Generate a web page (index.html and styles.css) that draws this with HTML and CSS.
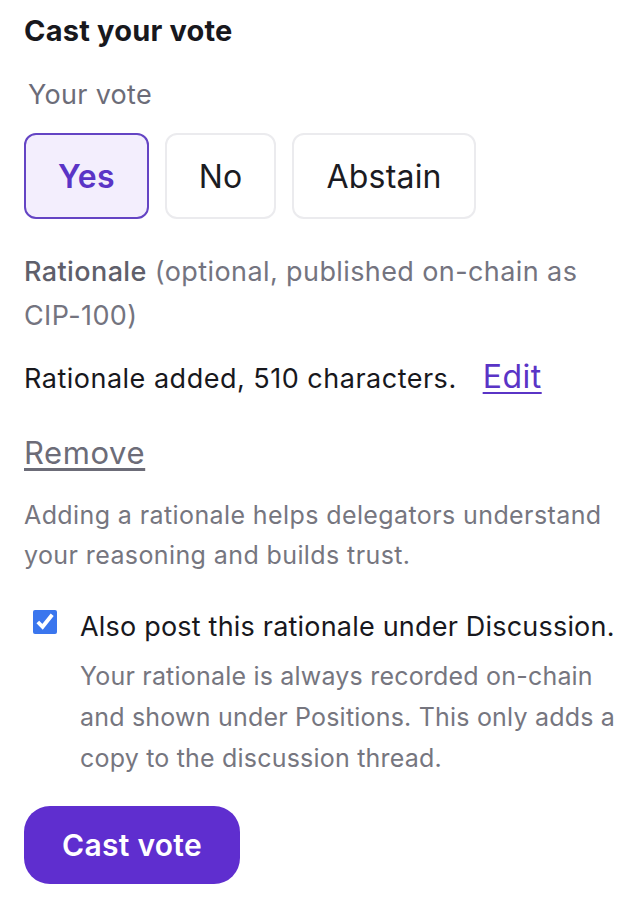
FILE: index.html
```
<!DOCTYPE html>
<html lang="en">
<head>
    <meta charset="UTF-8">
    <meta name="viewport" content="width=device-width, initial-scale=1.0">
    <title>Cast your vote</title>
    <link rel="stylesheet" href="styles.css">
</head>
<body>
    <section class="vote-panel">
        <h2 class="panel-title">Cast your vote</h2>

        <div class="field-label">Your vote</div>
        <div class="choice-group">
            <button class="choice choice-active">Yes</button>
            <button class="choice">No</button>
            <button class="choice">Abstain</button>
        </div>

        <p class="rationale-label"><strong>Rationale</strong> (optional, published on-chain as CIP-100)</p>

        <div class="rationale-status">
            <span>Rationale added, 510 characters.</span>
            <a href="#" class="link-edit">Edit</a>
        </div>
        <a href="#" class="link-remove">Remove</a>

        <p class="hint">Adding a rationale helps delegators understand your reasoning and builds trust.</p>

        <label class="check-row">
            <input type="checkbox" checked>
            <span class="check-text">
                <span class="check-title">Also post this rationale under Discussion.</span>
                <span class="check-note">Your rationale is always recorded on-chain and shown under Positions. This only adds a copy to the discussion thread.</span>
            </span>
        </label>

        <button class="submit-button">Cast vote</button>
    </section>
</body>
</html>
```

FILE: styles.css
```
* {
    margin: 0;
    padding: 0;
    box-sizing: border-box;
}

body {
    font-family: 'Inter', 'Noto Sans', sans-serif;
    background: #fff;
    color: #1b1b22;
}

.vote-panel {
    padding: 13px 24px 0;
    display: flex;
    flex-direction: column;
    align-items: flex-start;
}

.panel-title {
    font-size: 29px;
    font-weight: 700;
    line-height: 36px;
    letter-spacing: 0.2px;
    color: #18181d;
}

.field-label {
    margin-top: 29px;
    padding-left: 4px;
    font-size: 27px;
    line-height: 34px;
    letter-spacing: 0.3px;
    color: #6c6c78;
}

.choice-group {
    display: flex;
    gap: 16px;
    margin-top: 21px;
}

.choice {
    font-family: inherit;
    height: 86px;
    padding: 0 32px;
    font-size: 32px;
    letter-spacing: 0.2px;
    color: #1b1b22;
    background: #fff;
    border: 2px solid #ebebee;
    border-radius: 12px;
}

.choice-active {
    color: #5a34c6;
    font-weight: 600;
    background: #f3eefd;
    border-color: #6444c4;
}

.rationale-label {
    margin-top: 31px;
    font-size: 27px;
    line-height: 44px;
    letter-spacing: 0.4px;
    color: #74747f;
}

.rationale-label strong {
    font-weight: 500;
    color: #5f5f6b;
}

.rationale-status {
    margin-top: 19px;
    font-size: 27px;
    line-height: 40px;
    letter-spacing: 0.5px;
    color: #18181d;
    display: flex;
    align-items: baseline;
    gap: 26px;
}

.link-edit {
    font-size: 32px;
    color: #5a34c6;
    text-decoration-thickness: 2px;
    text-underline-offset: 4px;
}

.link-remove {
    margin-top: 34px;
    font-size: 31px;
    line-height: 40px;
    letter-spacing: 0.6px;
    color: #6c6c78;
    text-decoration-thickness: 3px;
    text-underline-offset: 4px;
}

.hint {
    margin-top: 22px;
    font-size: 25px;
    line-height: 40px;
    letter-spacing: 0.4px;
    color: #76767f;
}

.check-row {
    display: flex;
    gap: 23px;
    margin-top: 32px;
    padding-left: 9px;
}

.check-row input {
    width: 24px;
    height: 24px;
    margin-top: 3px;
    accent-color: #3a76ee;
    flex-shrink: 0;
}

.check-text {
    display: flex;
    flex-direction: column;
}

.check-title {
    font-size: 27px;
    line-height: 40px;
    letter-spacing: 0.2px;
    color: #18181d;
}

.check-note {
    margin-top: 9px;
    font-size: 25px;
    line-height: 41px;
    letter-spacing: 0.2px;
    color: #76767f;
}

.submit-button {
    margin-top: 27px;
    width: 216px;
    height: 78px;
    font-family: inherit;
    font-size: 30px;
    font-weight: 600;
    letter-spacing: 0.3px;
    color: #fff;
    background: #5f2ecf;
    border: none;
    border-radius: 26px;
}
```
